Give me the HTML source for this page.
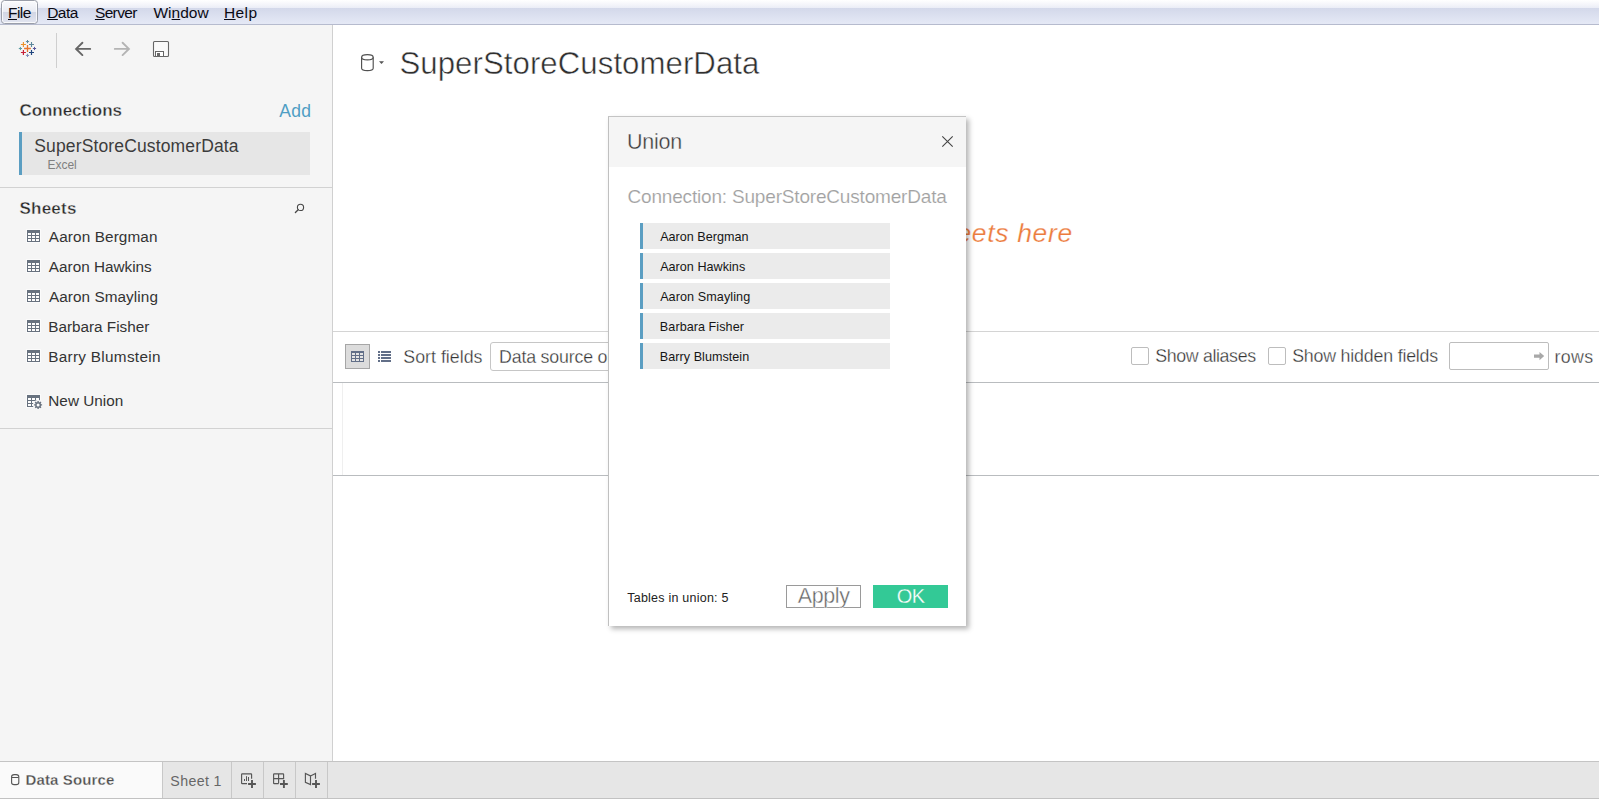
<!DOCTYPE html>
<html><head><meta charset="utf-8">
<style>
*{box-sizing:border-box;margin:0;padding:0}
html,body{width:1599px;height:799px;overflow:hidden;background:#fff;font-family:"Liberation Sans",sans-serif;color:#333}
.a{position:absolute}
.t{position:absolute;white-space:nowrap;line-height:1}
.t u{text-decoration:underline;text-decoration-thickness:1px;text-underline-offset:0.5px}
svg{position:absolute;overflow:visible}
.ti{position:absolute;left:27px;width:13px;height:12px;outline:1px solid rgba(255,255,255,.75)}
</style></head><body>
<!-- menubar -->
<div class="a" style="left:0;top:0;width:1599px;height:25px;background:linear-gradient(#ffffff 0px,#f3f4fa 5px,#eceef7 7.5px,#d3d8ea 8px,#e4e8f5 23px);border-bottom:1px solid #b6bbce"></div>
<div class="a" style="left:1px;top:0px;width:37px;height:24px;border:1px solid #9a9ea9;border-radius:3.5px;background:linear-gradient(#fafbfd 0px,#e9ebf3 10.5px,#d2d6e4 11.5px,#e2e5f0 22px);box-shadow:inset 0 0 0 1px rgba(255,255,255,.75)"></div>

<!-- sidebar -->
<div class="a" style="left:0;top:25px;width:333px;height:736px;background:#f5f5f5;border-right:1px solid #d0d0d0"></div>
<div class="a" style="left:56px;top:33px;width:1px;height:35px;background:#cfcfcf"></div>
<div class="a" style="left:19px;top:132px;width:291px;height:43px;background:#e6e6e6;border-left:3px solid #5b9ec2"></div>
<div class="a" style="left:0;top:187px;width:332px;height:1px;background:#d2d2d2"></div>
<div class="a" style="left:0;top:428px;width:332px;height:1px;background:#d2d2d2"></div>

<!-- main lines -->
<div class="a" style="left:333px;top:331px;width:1266px;height:1px;background:#d4d4d4"></div>
<div class="a" style="left:333px;top:382px;width:1266px;height:1px;background:#b9bcbf"></div>
<div class="a" style="left:333px;top:475px;width:1266px;height:1px;background:#b9bcbf"></div>
<div class="a" style="left:342px;top:383px;width:1px;height:92px;background:#efefef"></div>

<div class="a" style="left:345px;top:344px;width:25px;height:25px;background:#dcdcdc;border:1px solid #a6a6a6"></div>
<div class="a" style="left:490px;top:342px;width:200px;height:29px;background:#fff;border:1px solid #c6c6c6;border-radius:3px"></div>
<div class="a" style="left:1131px;top:347px;width:18px;height:18px;background:#fff;border:1px solid #bdbdbd;border-radius:2px"></div>
<div class="a" style="left:1268px;top:347px;width:18px;height:18px;background:#fff;border:1px solid #bdbdbd;border-radius:2px"></div>
<div class="a" style="left:1449px;top:342px;width:100px;height:28px;background:#fff;border:1px solid #bdbdbd;border-radius:2px"></div>

<!-- bottom bar -->
<div class="a" style="left:0;top:761px;width:1599px;height:38px;background:#e6e6e6;border-top:1px solid #c4c4c4;border-bottom:1px solid #c2c2c2"></div>
<div class="a" style="left:0;top:762px;width:163px;height:36px;background:#fafafa;border-right:1px solid #c8c8c8"></div>
<div class="a" style="left:231px;top:762px;width:1px;height:36px;background:#c8c8c8"></div>
<div class="a" style="left:263px;top:762px;width:1px;height:36px;background:#c8c8c8"></div>
<div class="a" style="left:295px;top:762px;width:1px;height:36px;background:#c8c8c8"></div>
<div class="a" style="left:327px;top:762px;width:1px;height:36px;background:#c8c8c8"></div>

<svg style="left:0;top:0" width="60" height="70"><path d="M24.1 48.5H30.9M27.5 45.1V51.9" stroke="#e8762d" stroke-width="1.3" fill="none"/><path d="M20.9 44.5H25.9M23.4 42.0V47.0" stroke="#eb9129" stroke-width="1.1" fill="none"/><path d="M29.0 44.5H34.0M31.5 42.0V47.0" stroke="#5b879b" stroke-width="1.1" fill="none"/><path d="M20.9 52.5H25.9M23.4 50.0V55.0" stroke="#c72037" stroke-width="1.2" fill="none"/><path d="M29.0 52.5H34.0M31.5 50.0V55.0" stroke="#1f457e" stroke-width="1.2" fill="none"/><path d="M25.9 41.6H29.1M27.5 40.0V43.2" stroke="#5b879b" stroke-width="1.0" fill="none"/><path d="M25.9 55.4H29.1M27.5 53.8V57.0" stroke="#7b8ab8" stroke-width="1.0" fill="none"/><path d="M18.799999999999997 48.5H22.0M20.4 46.9V50.1" stroke="#5c9ba0" stroke-width="1.0" fill="none"/><path d="M32.9 48.5H36.1M34.5 46.9V50.1" stroke="#59579c" stroke-width="1.0" fill="none"/></svg>
<svg style="left:0;top:0" width="200" height="70"><path d="M90.2 48.9H76.2M82.4 42.7L76.1 48.9L82.4 55.1" stroke="#666" stroke-width="1.9" fill="none" stroke-linecap="round" stroke-linejoin="miter"/><path d="M114.8 48.9H128.8M122.6 42.7L128.9 48.9L122.6 55.1" stroke="#b4b4b4" stroke-width="1.9" fill="none" stroke-linecap="round" stroke-linejoin="miter"/><rect x="153.5" y="41.5" width="15" height="15" rx="1" fill="#fafafa" stroke="#666" stroke-width="1.1"/><rect x="155.5" y="51.5" width="8" height="5" fill="#fff" stroke="#666" stroke-width="1"/><rect x="157" y="53" width="3" height="3.5" fill="#6a6a6a" shape-rendering="crispEdges"/></svg>
<svg style="left:27px;top:230px" width="13" height="12" shape-rendering="crispEdges"><rect x="-1" y="-1" width="15" height="14" fill="rgba(255,255,255,.6)"/><rect width="13" height="12" fill="#68727f"/><rect x="1" y="3" width="3" height="2" fill="#fdfdfd"/><rect x="5" y="3" width="3" height="2" fill="#fdfdfd"/><rect x="9" y="3" width="3" height="2" fill="#fdfdfd"/><rect x="1" y="6" width="3" height="2" fill="#fdfdfd"/><rect x="5" y="6" width="3" height="2" fill="#fdfdfd"/><rect x="9" y="6" width="3" height="2" fill="#fdfdfd"/><rect x="1" y="9" width="3" height="2" fill="#fdfdfd"/><rect x="5" y="9" width="3" height="2" fill="#fdfdfd"/><rect x="9" y="9" width="3" height="2" fill="#fdfdfd"/></svg>
<svg style="left:27px;top:260px" width="13" height="12" shape-rendering="crispEdges"><rect x="-1" y="-1" width="15" height="14" fill="rgba(255,255,255,.6)"/><rect width="13" height="12" fill="#68727f"/><rect x="1" y="3" width="3" height="2" fill="#fdfdfd"/><rect x="5" y="3" width="3" height="2" fill="#fdfdfd"/><rect x="9" y="3" width="3" height="2" fill="#fdfdfd"/><rect x="1" y="6" width="3" height="2" fill="#fdfdfd"/><rect x="5" y="6" width="3" height="2" fill="#fdfdfd"/><rect x="9" y="6" width="3" height="2" fill="#fdfdfd"/><rect x="1" y="9" width="3" height="2" fill="#fdfdfd"/><rect x="5" y="9" width="3" height="2" fill="#fdfdfd"/><rect x="9" y="9" width="3" height="2" fill="#fdfdfd"/></svg>
<svg style="left:27px;top:290px" width="13" height="12" shape-rendering="crispEdges"><rect x="-1" y="-1" width="15" height="14" fill="rgba(255,255,255,.6)"/><rect width="13" height="12" fill="#68727f"/><rect x="1" y="3" width="3" height="2" fill="#fdfdfd"/><rect x="5" y="3" width="3" height="2" fill="#fdfdfd"/><rect x="9" y="3" width="3" height="2" fill="#fdfdfd"/><rect x="1" y="6" width="3" height="2" fill="#fdfdfd"/><rect x="5" y="6" width="3" height="2" fill="#fdfdfd"/><rect x="9" y="6" width="3" height="2" fill="#fdfdfd"/><rect x="1" y="9" width="3" height="2" fill="#fdfdfd"/><rect x="5" y="9" width="3" height="2" fill="#fdfdfd"/><rect x="9" y="9" width="3" height="2" fill="#fdfdfd"/></svg>
<svg style="left:27px;top:320px" width="13" height="12" shape-rendering="crispEdges"><rect x="-1" y="-1" width="15" height="14" fill="rgba(255,255,255,.6)"/><rect width="13" height="12" fill="#68727f"/><rect x="1" y="3" width="3" height="2" fill="#fdfdfd"/><rect x="5" y="3" width="3" height="2" fill="#fdfdfd"/><rect x="9" y="3" width="3" height="2" fill="#fdfdfd"/><rect x="1" y="6" width="3" height="2" fill="#fdfdfd"/><rect x="5" y="6" width="3" height="2" fill="#fdfdfd"/><rect x="9" y="6" width="3" height="2" fill="#fdfdfd"/><rect x="1" y="9" width="3" height="2" fill="#fdfdfd"/><rect x="5" y="9" width="3" height="2" fill="#fdfdfd"/><rect x="9" y="9" width="3" height="2" fill="#fdfdfd"/></svg>
<svg style="left:27px;top:350px" width="13" height="12" shape-rendering="crispEdges"><rect x="-1" y="-1" width="15" height="14" fill="rgba(255,255,255,.6)"/><rect width="13" height="12" fill="#68727f"/><rect x="1" y="3" width="3" height="2" fill="#fdfdfd"/><rect x="5" y="3" width="3" height="2" fill="#fdfdfd"/><rect x="9" y="3" width="3" height="2" fill="#fdfdfd"/><rect x="1" y="6" width="3" height="2" fill="#fdfdfd"/><rect x="5" y="6" width="3" height="2" fill="#fdfdfd"/><rect x="9" y="6" width="3" height="2" fill="#fdfdfd"/><rect x="1" y="9" width="3" height="2" fill="#fdfdfd"/><rect x="5" y="9" width="3" height="2" fill="#fdfdfd"/><rect x="9" y="9" width="3" height="2" fill="#fdfdfd"/></svg>
<svg style="left:27px;top:395px" width="16" height="15"><g shape-rendering="crispEdges"><rect x="-1" y="-1" width="15" height="14" fill="rgba(255,255,255,.6)"/><rect width="13" height="12" fill="#68727f"/><rect x="1" y="3" width="3" height="2" fill="#fdfdfd"/><rect x="5" y="3" width="3" height="2" fill="#fdfdfd"/><rect x="9" y="3" width="3" height="2" fill="#fdfdfd"/><rect x="1" y="6" width="3" height="2" fill="#fdfdfd"/><rect x="5" y="6" width="3" height="2" fill="#fdfdfd"/><rect x="9" y="6" width="3" height="2" fill="#fdfdfd"/><rect x="1" y="9" width="3" height="2" fill="#fdfdfd"/><rect x="5" y="9" width="3" height="2" fill="#fdfdfd"/><rect x="9" y="9" width="3" height="2" fill="#fdfdfd"/></g><circle cx="11.1" cy="9.9" r="5.2" fill="#f5f5f5"/><path d="M13.70 9.90L15.10 9.90M12.94 11.74L13.93 12.73M11.10 12.50L11.10 13.90M9.26 11.74L8.27 12.73M8.50 9.90L7.10 9.90M9.26 8.06L8.27 7.07M11.10 7.30L11.10 5.90M12.94 8.06L13.93 7.07" stroke="#68727f" stroke-width="1.4" fill="none"/><circle cx="11.1" cy="9.9" r="2.25" fill="#fff" stroke="#68727f" stroke-width="1.5"/></svg>
<svg style="left:290px;top:200px" width="20" height="20"><circle cx="10.5" cy="7.4" r="3.1" fill="none" stroke="#484848" stroke-width="1.1"/><path d="M8.2 9.7L5.4 12.5" stroke="#484848" stroke-width="1.3" stroke-linecap="round"/></svg>
<svg style="left:355px;top:48px" width="40" height="30"><path d="M6.6 9.2V20.2A5.8 2.4 0 0 0 18.2 20.2V9.2" fill="none" stroke="#505050" stroke-width="1.15"/><ellipse cx="12.4" cy="9.2" rx="5.8" ry="2.6" fill="none" stroke="#505050" stroke-width="1.15"/><path d="M24 13.3H29L26.5 15.9Z" fill="#555"/></svg>
<svg style="left:351px;top:351px" width="13" height="11" shape-rendering="crispEdges"><rect width="13" height="11" fill="#626f88"/><rect x="1" y="2" width="3" height="2" fill="#e4e4e4"/><rect x="5" y="2" width="3" height="2" fill="#e4e4e4"/><rect x="9" y="2" width="3" height="2" fill="#e4e4e4"/><rect x="1" y="5" width="3" height="2" fill="#e4e4e4"/><rect x="5" y="5" width="3" height="2" fill="#e4e4e4"/><rect x="9" y="5" width="3" height="2" fill="#e4e4e4"/><rect x="1" y="8" width="3" height="2" fill="#e4e4e4"/><rect x="5" y="8" width="3" height="2" fill="#e4e4e4"/><rect x="9" y="8" width="3" height="2" fill="#e4e4e4"/></svg>
<svg style="left:378px;top:351px" width="13" height="11" shape-rendering="crispEdges"><rect x="0" y="0" width="2" height="2" fill="#626f88"/><rect x="3" y="0" width="10" height="2" fill="#626f88"/><rect x="0" y="3" width="2" height="2" fill="#626f88"/><rect x="3" y="3" width="10" height="2" fill="#626f88"/><rect x="0" y="6" width="2" height="2" fill="#626f88"/><rect x="3" y="6" width="10" height="2" fill="#626f88"/><rect x="0" y="9" width="2" height="2" fill="#626f88"/><rect x="3" y="9" width="10" height="2" fill="#626f88"/></svg>
<svg style="left:1530px;top:348px" width="20" height="16"><path d="M4 6.5H9.5V4L14.2 8.1L9.5 12.2V9.7H4Z" fill="#a8a8a8"/></svg>
<svg style="left:8px;top:770px" width="16" height="20"><rect x="3.6" y="4.6" width="7.2" height="10" rx="2.6" ry="2.2" fill="none" stroke="#555" stroke-width="1.1"/><path d="M3.8 7.5H10.6" fill="none" stroke="#555" stroke-width="1"/></svg>
<svg style="left:0;top:0" width="340" height="799"><path d="M247 783.6H242.2Q241.6 783.6 241.6 783V774.4Q241.6 773.8 242.2 773.8H251Q251.6 773.8 251.6 774.4V778.7" fill="none" stroke="#565656" stroke-width="1.15"/><path d="M244.5 781V779M246.5 781V776.2M248.5 781V777" stroke="#565656" stroke-width="1"/><path d="M248.1 784H255.9M252 780.1V787.9" stroke="#565656" stroke-width="1.9" fill="none"/><path d="M278.6 783.6H274.2Q273.6 783.6 273.6 783V774.4Q273.6 773.8 274.2 773.8H283Q283.6 773.8 283.6 774.4V778.6H273.6M278.6 773.8V783.6" fill="none" stroke="#565656" stroke-width="1.15"/><path d="M280.0 784H287.79999999999995M283.9 780.1V787.9" stroke="#565656" stroke-width="1.9" fill="none"/><path d="M305.4 773.5V782.3L310.5 784.6V775.9ZM310.5 775.9L315.5 773.5V778.7" fill="none" stroke="#565656" stroke-width="1.15" stroke-linejoin="miter"/><path d="M312.1 784H319.9M316 780.1V787.9" stroke="#565656" stroke-width="1.9" fill="none"/></svg>

<div class="t" style="left:8.00px;top:4.88px;font-size:15.5px;color:#0a0a14;letter-spacing:-0.524px;"><u>F</u>ile</div>
<div class="t" style="left:47.16px;top:4.88px;font-size:15.5px;color:#0a0a14;letter-spacing:-0.510px;"><u>D</u>ata</div>
<div class="t" style="left:94.92px;top:4.88px;font-size:15.5px;color:#0a0a14;letter-spacing:-0.630px;"><u>S</u>erver</div>
<div class="t" style="left:153.48px;top:4.88px;font-size:15.5px;color:#0a0a14;letter-spacing:0.015px;">Wi<u>n</u>dow</div>
<div class="t" style="left:224.00px;top:4.88px;font-size:15.5px;color:#0a0a14;letter-spacing:0.378px;"><u>H</u>elp</div>
<div class="t" style="left:19.40px;top:101.61px;font-size:17px;color:#2a2a2a;letter-spacing:-0.036px;font-weight:bold;-webkit-text-stroke:0.4px #f5f5f5;">Connections</div>
<div class="t" style="left:279.30px;top:103.19px;font-size:17.5px;color:#4f9ec4;letter-spacing:0.219px;">Add</div>
<div class="t" style="left:34.23px;top:138.19px;font-size:17.5px;color:#3c3c3c;letter-spacing:0.144px;">SuperStoreCustomerData</div>
<div class="t" style="left:47.53px;top:158.84px;font-size:12px;color:#808080;letter-spacing:-0.023px;">Excel</div>
<div class="t" style="left:19.46px;top:199.61px;font-size:17px;color:#2a2a2a;letter-spacing:0.234px;font-weight:bold;-webkit-text-stroke:0.4px #f5f5f5;">Sheets</div>
<div class="t" style="left:48.85px;top:229.05px;font-size:15.3px;color:#333;letter-spacing:0.126px;">Aaron Bergman</div>
<div class="t" style="left:48.85px;top:259.05px;font-size:15.3px;color:#333;letter-spacing:0.002px;">Aaron Hawkins</div>
<div class="t" style="left:48.88px;top:289.05px;font-size:15.3px;color:#333;letter-spacing:0.080px;">Aaron Smayling</div>
<div class="t" style="left:48.23px;top:319.05px;font-size:15.3px;color:#333;letter-spacing:-0.004px;">Barbara Fisher</div>
<div class="t" style="left:48.23px;top:349.05px;font-size:15.3px;color:#333;letter-spacing:0.303px;">Barry Blumstein</div>
<div class="t" style="left:48.29px;top:393.05px;font-size:15.3px;color:#333;letter-spacing:0.021px;">New Union</div>
<div class="t" style="left:399.45px;top:47.59px;font-size:31.2px;color:#2f2f2f;letter-spacing:0.055px;-webkit-text-stroke:0.5px #fff;">SuperStoreCustomerData</div>
<div class="t" style="left:956.42px;top:219.57px;font-size:26.5px;color:#ec7b3d;letter-spacing:0.661px;font-style:italic;-webkit-text-stroke:0.25px #fff;">eets here</div>
<div class="t" style="left:403.36px;top:348.93px;font-size:17.8px;color:#333;letter-spacing:0.004px;-webkit-text-stroke:0.3px #fff;">Sort fields</div>
<div class="t" style="left:499.06px;top:348.93px;font-size:17.8px;color:#333;letter-spacing:-0.189px;-webkit-text-stroke:0.3px #fff;">Data source order</div>
<div class="t" style="left:1155.30px;top:347.93px;font-size:17.8px;color:#333;letter-spacing:-0.366px;-webkit-text-stroke:0.3px #fff;">Show aliases</div>
<div class="t" style="left:1292.15px;top:347.93px;font-size:17.8px;color:#333;letter-spacing:-0.189px;-webkit-text-stroke:0.3px #fff;">Show hidden fields</div>
<div class="t" style="left:1554.56px;top:348.93px;font-size:17.8px;color:#333;letter-spacing:0.367px;-webkit-text-stroke:0.3px #fff;">rows</div>
<div class="t" style="left:25.57px;top:772.30px;font-size:15px;color:#4c4c4c;letter-spacing:0.123px;font-weight:bold;-webkit-text-stroke:0.3px #fafafa;">Data Source</div>
<div class="t" style="left:170.30px;top:773.98px;font-size:14.2px;color:#666;letter-spacing:0.368px;">Sheet 1</div>

<!-- dialog -->
<div class="a" style="left:608px;top:116px;width:358px;height:510px;background:#fff;border-left:1px solid #c0c0c0;border-top:1px solid #c4c4c4;box-shadow:3px 3px 5px 0 rgba(0,0,0,.29)"></div>
<div class="a" style="left:609px;top:117px;width:357px;height:50px;background:#f5f5f5"></div>
<div class="a" style="left:640px;top:223px;width:250px;height:26px;background:#ebebeb;border-left:3px solid #5b9ec2"></div>
<div class="a" style="left:640px;top:253px;width:250px;height:26px;background:#ebebeb;border-left:3px solid #5b9ec2"></div>
<div class="a" style="left:640px;top:283px;width:250px;height:26px;background:#ebebeb;border-left:3px solid #5b9ec2"></div>
<div class="a" style="left:640px;top:313px;width:250px;height:26px;background:#ebebeb;border-left:3px solid #5b9ec2"></div>
<div class="a" style="left:640px;top:343px;width:250px;height:26px;background:#ebebeb;border-left:3px solid #5b9ec2"></div>
<div class="a" style="left:786px;top:585px;width:75px;height:23px;background:#fff;border:1px solid #9a9a9a"></div>
<div class="a" style="left:873px;top:585px;width:75px;height:23px;background:#33c996"></div>
<svg style="left:942px;top:136px" width="11" height="11"><path d="M0.3 0.3L10.7 10.7M10.7 0.3L0.3 10.7" stroke="#444" stroke-width="1.1" fill="none"/></svg>
<div class="t" style="left:627.06px;top:131.80px;font-size:21.5px;color:#383838;letter-spacing:-0.268px;-webkit-text-stroke:0.35px #f5f5f5;">Union</div>
<div class="t" style="left:627.47px;top:186.92px;font-size:19px;color:#a2a2a2;letter-spacing:-0.180px;-webkit-text-stroke:0.15px #fff;">Connection: SuperStoreCustomerData</div>
<div class="t" style="left:660.14px;top:231.33px;font-size:12.6px;color:#161616;letter-spacing:0.021px;">Aaron Bergman</div>
<div class="t" style="left:660.14px;top:261.33px;font-size:12.6px;color:#161616;letter-spacing:0.030px;">Aaron Hawkins</div>
<div class="t" style="left:660.14px;top:291.33px;font-size:12.6px;color:#161616;letter-spacing:0.090px;">Aaron Smayling</div>
<div class="t" style="left:659.86px;top:321.33px;font-size:12.6px;color:#161616;letter-spacing:0.057px;">Barbara Fisher</div>
<div class="t" style="left:659.86px;top:351.33px;font-size:12.6px;color:#161616;letter-spacing:0.031px;">Barry Blumstein</div>
<div class="t" style="left:627.24px;top:592.42px;font-size:12.5px;color:#222;letter-spacing:0.233px;">Tables in union: 5</div>
<div class="t" style="left:797.85px;top:585.80px;font-size:21.5px;color:#666;letter-spacing:-0.409px;-webkit-text-stroke:0.4px #fff;">Apply</div>
<div class="t" style="left:896.67px;top:586.07px;font-size:20px;color:#fff;letter-spacing:-0.526px;-webkit-text-stroke:0.3px #33c996;">OK</div>
</body></html>
